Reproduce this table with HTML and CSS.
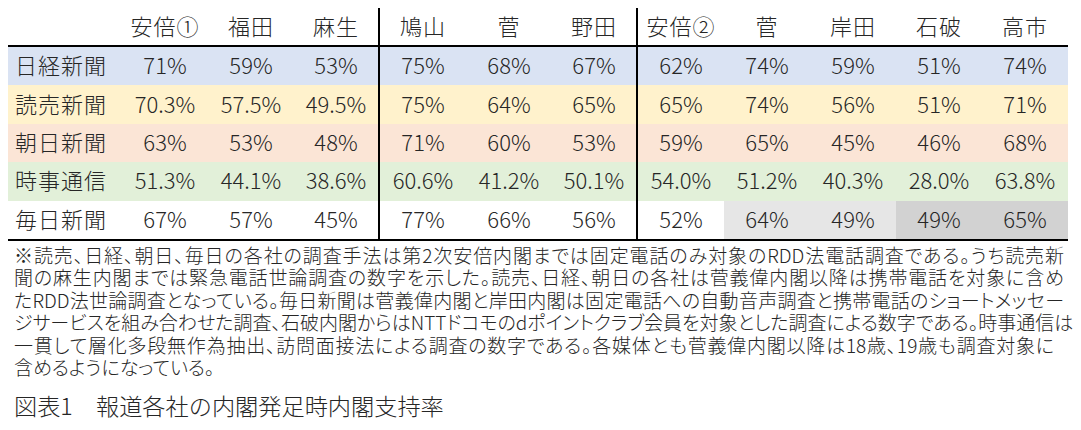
FILE: index.html
```html
<!DOCTYPE html>
<html lang="ja">
<head>
<meta charset="utf-8">
<title>図表1 報道各社の内閣発足時内閣支持率</title>
<link rel="stylesheet" href="styles.css">
</head>
<body>
<div class="tbl">
  <div class="row head">
    <div class="c lbl"></div>
    <div class="c">安倍①</div><div class="c">福田</div><div class="c sep">麻生</div>
    <div class="c">鳩山</div><div class="c">菅</div><div class="c sep">野田</div>
    <div class="c">安倍②</div><div class="c">菅</div><div class="c">岸田</div><div class="c">石破</div><div class="c">高市</div>
  </div>
  <div class="row blue">
    <div class="c lbl">日経新聞</div>
    <div class="c">71%</div><div class="c">59%</div><div class="c sep">53%</div>
    <div class="c">75%</div><div class="c">68%</div><div class="c sep">67%</div>
    <div class="c">62%</div><div class="c">74%</div><div class="c">59%</div><div class="c">51%</div><div class="c">74%</div>
  </div>
  <div class="row yellow">
    <div class="c lbl">読売新聞</div>
    <div class="c">70.3%</div><div class="c">57.5%</div><div class="c sep">49.5%</div>
    <div class="c">75%</div><div class="c">64%</div><div class="c sep">65%</div>
    <div class="c">65%</div><div class="c">74%</div><div class="c">56%</div><div class="c">51%</div><div class="c">71%</div>
  </div>
  <div class="row salmon">
    <div class="c lbl">朝日新聞</div>
    <div class="c">63%</div><div class="c">53%</div><div class="c sep">48%</div>
    <div class="c">71%</div><div class="c">60%</div><div class="c sep">53%</div>
    <div class="c">59%</div><div class="c">65%</div><div class="c">45%</div><div class="c">46%</div><div class="c">68%</div>
  </div>
  <div class="row green">
    <div class="c lbl">時事通信</div>
    <div class="c">51.3%</div><div class="c">44.1%</div><div class="c sep">38.6%</div>
    <div class="c">60.6%</div><div class="c">41.2%</div><div class="c sep">50.1%</div>
    <div class="c">54.0%</div><div class="c">51.2%</div><div class="c">40.3%</div><div class="c">28.0%</div><div class="c">63.8%</div>
  </div>
  <div class="row white">
    <div class="c lbl">毎日新聞</div>
    <div class="c">67%</div><div class="c">57%</div><div class="c sep">45%</div>
    <div class="c">77%</div><div class="c">66%</div><div class="c sep">56%</div>
    <div class="c">52%</div><div class="c g1">64%</div><div class="c g1">49%</div><div class="c g2">49%</div><div class="c g2">65%</div>
  </div>
</div>
<div class="note">
  <span class="ln">※読売、日経、朝日、毎日の各社の調査手法は第2次安倍内閣までは固定電話のみ対象のRDD法電話調査である。うち読売新</span>
  <span class="ln">聞の麻生内閣までは緊急電話世論調査の数字を示した。読売、日経、朝日の各社は菅義偉内閣以降は携帯電話を対象に含め</span>
  <span class="ln">たRDD法世論調査となっている。毎日新聞は菅義偉内閣と岸田内閣は固定電話への自動音声調査と携帯電話のショートメッセー</span>
  <span class="ln">ジサービスを組み合わせた調査、石破内閣からはNTTドコモのdポイントクラブ会員を対象とした調査による数字である。時事通信は</span>
  <span class="ln l5">一貫して層化多段無作為抽出、訪問面接法による調査の数字である。各媒体とも菅義偉内閣以降は18歳、19歳も調査対象に</span>
  <span class="ln last">含めるようになっている。</span>
</div>
<div class="caption">図表1　報道各社の内閣発足時内閣支持率</div>
</body>
</html>
```

FILE: styles.css
```css
body {
  margin: 8px;
  background: #ffffff;
  color: #262626;
  font-family: "Noto Sans CJK JP", "Noto Sans", sans-serif;
  font-weight: 300;
}

.tbl {
  width: 1060px;
  border-bottom: 2px solid #000000;
}

.row {
  display: grid;
  grid-template-columns: 114px repeat(11, 86px);
  height: 38.4px;
}

.head {
  height: 39px;
  border-bottom: 2px solid #000000;
  box-sizing: border-box;
}

.blue { background: #dae3f3; }
.yellow { background: #fff2cc; }
.salmon { background: #fbe5d6; }
.green { background: #e2f0d9; }
.white { background: #ffffff; }

.c {
  display: flex;
  align-items: center;
  justify-content: center;
  box-sizing: border-box;
  padding-bottom: 4px;
  font-size: 22px;
  line-height: 1;
  white-space: nowrap;
}

.head .c {
  letter-spacing: 1px;
}

.lbl {
  justify-content: flex-start;
  padding-left: 7px;
  letter-spacing: 1px;
}

.sep {
  border-right: 2px solid #000000;
}

.g1 { background: #e6e6e6; }
.g2 { background: #d2d2d2; }

.note {
  padding: 3px 0 0 6px;
  font-size: 19px;
  line-height: 22.4px;
  white-space: nowrap;
  font-feature-settings: "palt";
}

.ln {
  display: block;
  width: 1050px;
  text-align: justify;
  text-align-last: justify;
  text-justify: inter-character;
}

.ln.l5 {
  width: 1040px;
}

.ln.last {
  text-align-last: left;
}

.caption {
  margin-top: 12px;
  padding-left: 6px;
  font-size: 23.2px;
  line-height: 30px;
}
```
